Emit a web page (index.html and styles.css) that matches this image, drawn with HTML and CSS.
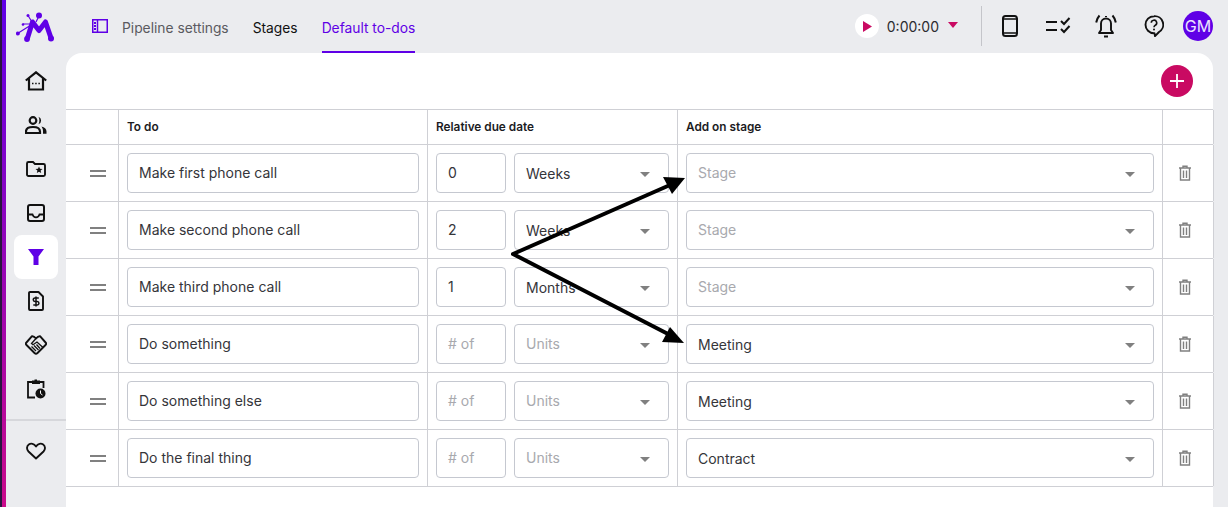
FILE: index.html
```html
<!DOCTYPE html>
<html lang="en">
<head>
<meta charset="utf-8">
<title>Default to-dos</title>
<link rel="stylesheet" href="styles.css">
</head>
<body>
<div class="rail"></div>
<div class="app">
  <header class="topbar">
    <svg class="logo" viewBox="0 0 38 30" width="38" height="30">
      <g fill="#5f00e6" stroke="#5f00e6">
        <path d="M11.500 26 L16.500 10 L23 18.500 L29.500 10 L35 26" fill="none" stroke-width="5" stroke-linejoin="round" stroke-linecap="round"/>
        <path d="M16 10 L12 3.500 M23 4 L20 10 M15 13 L1.500 21.500 M15 12 L7 12" fill="none" stroke-width="1.200"/>
        <circle cx="23" cy="3.500" r="3" stroke="none"/><circle cx="12" cy="3.500" r="1.500" stroke="none"/>
        <circle cx="7" cy="12.500" r="1.300" stroke="none"/><circle cx="1.900" cy="21.500" r="2" stroke="none"/>
        <circle cx="11" cy="27" r="2.900" stroke="none"/><circle cx="35" cy="26.500" r="3" stroke="none"/>
      </g>
    </svg>
    <nav class="tabs">
      <svg class="panel-icon" viewBox="0 0 16 14" width="16" height="14"><path d="M.75.75h14.500v12.500H.75zM5.500.75v12.500" fill="none" stroke="#5f00e6" stroke-width="1.500"/><path d="M2 3h2v2H2zM2 6h2v2H2zM2 9h2v2H2z" fill="#5f00e6"/></svg>
      <a class="tab tab-muted">Pipeline settings</a>
      <a class="tab">Stages</a>
      <a class="tab tab-active">Default to-dos</a>
    </nav>
    <div class="actions">
      <span class="play"><svg viewBox="0 0 10 12" width="9" height="11"><path d="M0 0l10 6-10 6z" fill="#c90a62"/></svg></span>
      <span class="time">0:00:00</span>
      <span class="caret"></span>
      <span class="vline"></span>
      <svg class="act act-phone" viewBox="0 0 16 22" width="16" height="22"><rect x="1" y="1" width="14" height="20" rx="2.500" fill="none" stroke="#111" stroke-width="2"/><path d="M2 4h12M2 18h12" stroke="#111" stroke-width="1.300"/></svg>
      <svg class="act act-tasks" viewBox="0 0 26 18" width="26" height="18"><path d="M1 5h11M1 13h11" stroke="#111" stroke-width="2.200"/><path d="M16 4l3 3 5.500-6M16 12l3 3 5.500-6" fill="none" stroke="#111" stroke-width="2"/></svg>
      <svg class="act act-bell" viewBox="0 0 22 24" width="22" height="24"><path d="M4 19h14l-2-3V9.500a5 5 0 0 0-10 0V16z" fill="none" stroke="#111" stroke-width="1.900" stroke-linejoin="round"/><path d="M9 22.500h4M11 3V2" stroke="#111" stroke-width="2"/><path d="M4.500 1.500Q1.800 4.500 1.200 8.500M17.500 1.500Q20.200 4.500 20.800 8.500" fill="none" stroke="#111" stroke-width="2"/></svg>
      <svg class="act act-help" viewBox="0 0 20 22" width="20" height="22"><path d="M10 1.200a8.500 8.500 0 1 0 0 17h.500l.5 3 4-4.200A8.500 8.500 0 0 0 10 1.200z" fill="none" stroke="#111" stroke-width="1.900" stroke-linejoin="round"/><path d="M7.300 7.800a2.700 2.700 0 1 1 4 2.400c-.9.500-1.300 1-1.300 2" fill="none" stroke="#111" stroke-width="1.600"/><circle cx="10" cy="14.600" r="1" fill="#111"/></svg>
      <span class="avatar">GM</span>
    </div>
  </header>
  <div class="body">
    <aside class="sidebar">
      <a class="side-item"><svg viewBox="0 0 22 20" width="22" height="20"><path d="M.8 9.500L11 1.300l10.200 8.200M4 7.500V18.500h14V7.500" fill="none" stroke="#111" stroke-width="2.200"/><path d="M7 12.500h1.500M10.200 12.500h1.500M13.400 12.500h1.500" stroke="#111" stroke-width="1.500"/></svg></a>
      <a class="side-item"><svg viewBox="0 0 22 18" width="22" height="18"><circle cx="8" cy="4.500" r="3.300" fill="none" stroke="#111" stroke-width="2.200"/><path d="M1 17v-1.500C1 12.500 4 11 8 11s7 1.500 7 4.500V17z" fill="none" stroke="#111" stroke-width="2.200"/><path d="M13.500.8a4 4 0 0 1 0 7.500c1.200-2.300 1.200-5.200 0-7.500zM16.500 10.500c3 .7 5 2.300 5 5V17.800h-3.500v-2.300c0-2-.5-3.500-1.500-5z" fill="#111"/></svg></a>
      <a class="side-item"><svg viewBox="0 0 20 16" width="20" height="16"><path d="M1 2.500A1.500 1.500 0 0 1 2.500 1H7l2 2h8.500A1.500 1.500 0 0 1 19 4.500v9a1.500 1.500 0 0 1-1.500 1.500h-15A1.500 1.500 0 0 1 1 13.500z" fill="none" stroke="#111" stroke-width="1.900"/><path d="M13 5.500l1 2.300 2.500.2-1.900 1.600.6 2.400-2.200-1.300-2.200 1.300.6-2.400L9.500 8l2.500-.2z" fill="#111"/></svg></a>
      <a class="side-item"><svg viewBox="0 0 18 18" width="18" height="18"><rect x="1" y="1" width="16" height="16" rx="2" fill="none" stroke="#111" stroke-width="2"/><path d="M1 10.500h4.500c.7 2 2 2.800 3.500 2.800s2.800-.8 3.500-2.800H17" fill="none" stroke="#111" stroke-width="1.800"/></svg></a>
      <a class="side-item side-active"><svg viewBox="0 0 16 16" width="16" height="16"><path d="M0 0h16l-5.500 7.500V16h-5V7.500z" fill="#5f00e6"/></svg></a>
      <a class="side-item"><svg viewBox="0 0 16 20" width="16" height="20"><path d="M1 2a1 1 0 0 1 1-1h8.500L15 5.500V18a1 1 0 0 1-1 1H2a1 1 0 0 1-1-1z" fill="none" stroke="#111" stroke-width="1.900" stroke-linejoin="round"/><path d="M10.800 7H7a1.500 1.500 0 0 0 0 3.500h2.200a1.600 1.600 0 0 1 0 3.500H5.300M8 5.500V15.500" fill="none" stroke="#111" stroke-width="1.500"/></svg></a>
      <a class="side-item"><svg viewBox="0 0 22 20" width="22" height="20"><path d="M11 3.500Q9 1 7 1.200L1 8q-.5 1 .5 2l8 8q1.500 1.300 3 0l8-8q1-1 .5-2l-6-6.800Q13 1 11 3.500z" fill="none" stroke="#111" stroke-width="1.900" stroke-linejoin="round"/><path d="M11 3.500L6.500 8.500l1.500 1.300 4-2.800 6 5.500M6.500 11.500l4.500 4.500M9 10.500l4.500 4.500M11.500 9.500l3.500 4" fill="none" stroke="#111" stroke-width="1.300"/></svg></a>
      <a class="side-item"><svg viewBox="0 0 20 20" width="20" height="20"><path d="M6 3H2v15.500h7M14 3h3.500v6" fill="none" stroke="#111" stroke-width="1.800"/><path d="M6 1.500h2.500V.5h2.500v1h3V5H6z" fill="#111"/><circle cx="14.500" cy="14.500" r="5" fill="#111"/><path d="M14.500 11.500v3l2 1.500" fill="none" stroke="#fff" stroke-width="1"/></svg></a>
      <div class="side-rule"></div>
      <a class="side-item"><svg viewBox="0 0 20 18" width="20" height="18"><path d="M10 16.500L2.500 9.500C.3 7.300.7 4 2.800 2.500 5 1 8 1.500 10 4.500c2-3 5-3.500 7.200-2 2.100 1.500 2.500 4.800.3 7z" fill="none" stroke="#111" stroke-width="1.900" stroke-linejoin="round"/></svg></a>
    </aside>
    <main class="card">
      <div class="card-top">
        <button class="add"><svg viewBox="0 0 14 14" width="14" height="14"><path d="M7 0v14M0 7h14" stroke="#fff" stroke-width="1.800"/></svg></button>
      </div>
      <div class="table">
        <div class="row row-head">
          <div class="cell c-drag"></div>
          <div class="cell c-todo">To do</div>
          <div class="cell c-due">Relative due date</div>
          <div class="cell c-stage">Add on stage</div>
          <div class="cell c-del"></div>
        </div>
        <div class="row">
          <div class="cell c-drag"><span class="drag"></span></div>
          <div class="cell c-todo"><div class="field">Make first phone call</div></div>
          <div class="cell c-due"><div class="field num">0</div><div class="field sel">Weeks<i class="arrow"></i></div></div>
          <div class="cell c-stage"><div class="field sel ph">Stage<i class="arrow"></i></div></div>
          <div class="cell c-del"><svg class="trash" viewBox="0 0 14 16" width="14" height="16"><path d="M1 3h12M5 3V1.200h4V3M2.500 3v12h9V3M5.500 5.500v7.500M8.500 5.500v7.500" fill="none" stroke="#808080" stroke-width="1.400"/></svg></div>
        </div>
        <div class="row">
          <div class="cell c-drag"><span class="drag"></span></div>
          <div class="cell c-todo"><div class="field">Make second phone call</div></div>
          <div class="cell c-due"><div class="field num">2</div><div class="field sel">Weeks<i class="arrow"></i></div></div>
          <div class="cell c-stage"><div class="field sel ph">Stage<i class="arrow"></i></div></div>
          <div class="cell c-del"><svg class="trash" viewBox="0 0 14 16" width="14" height="16"><path d="M1 3h12M5 3V1.200h4V3M2.500 3v12h9V3M5.500 5.500v7.500M8.500 5.500v7.500" fill="none" stroke="#808080" stroke-width="1.400"/></svg></div>
        </div>
        <div class="row">
          <div class="cell c-drag"><span class="drag"></span></div>
          <div class="cell c-todo"><div class="field">Make third phone call</div></div>
          <div class="cell c-due"><div class="field num">1</div><div class="field sel">Months<i class="arrow"></i></div></div>
          <div class="cell c-stage"><div class="field sel ph">Stage<i class="arrow"></i></div></div>
          <div class="cell c-del"><svg class="trash" viewBox="0 0 14 16" width="14" height="16"><path d="M1 3h12M5 3V1.200h4V3M2.500 3v12h9V3M5.500 5.500v7.500M8.500 5.500v7.500" fill="none" stroke="#808080" stroke-width="1.400"/></svg></div>
        </div>
        <div class="row">
          <div class="cell c-drag"><span class="drag"></span></div>
          <div class="cell c-todo"><div class="field">Do something</div></div>
          <div class="cell c-due"><div class="field num ph">#&nbsp;of</div><div class="field sel ph">Units<i class="arrow"></i></div></div>
          <div class="cell c-stage"><div class="field sel">Meeting<i class="arrow"></i></div></div>
          <div class="cell c-del"><svg class="trash" viewBox="0 0 14 16" width="14" height="16"><path d="M1 3h12M5 3V1.200h4V3M2.500 3v12h9V3M5.500 5.500v7.500M8.500 5.500v7.500" fill="none" stroke="#808080" stroke-width="1.400"/></svg></div>
        </div>
        <div class="row">
          <div class="cell c-drag"><span class="drag"></span></div>
          <div class="cell c-todo"><div class="field">Do something else</div></div>
          <div class="cell c-due"><div class="field num ph">#&nbsp;of</div><div class="field sel ph">Units<i class="arrow"></i></div></div>
          <div class="cell c-stage"><div class="field sel">Meeting<i class="arrow"></i></div></div>
          <div class="cell c-del"><svg class="trash" viewBox="0 0 14 16" width="14" height="16"><path d="M1 3h12M5 3V1.200h4V3M2.500 3v12h9V3M5.500 5.500v7.500M8.500 5.500v7.500" fill="none" stroke="#808080" stroke-width="1.400"/></svg></div>
        </div>
        <div class="row">
          <div class="cell c-drag"><span class="drag"></span></div>
          <div class="cell c-todo"><div class="field">Do the final thing</div></div>
          <div class="cell c-due"><div class="field num ph">#&nbsp;of</div><div class="field sel ph">Units<i class="arrow"></i></div></div>
          <div class="cell c-stage"><div class="field sel">Contract<i class="arrow"></i></div></div>
          <div class="cell c-del"><svg class="trash" viewBox="0 0 14 16" width="14" height="16"><path d="M1 3h12M5 3V1.200h4V3M2.500 3v12h9V3M5.500 5.500v7.500M8.500 5.500v7.500" fill="none" stroke="#808080" stroke-width="1.400"/></svg></div>
        </div>
      </div>
    </main>
  </div>
</div>
<svg class="annot" viewBox="0 0 200 200" width="200" height="200">
  <path d="M3 84L160 15M3 84L160 165" fill="none" stroke="#000" stroke-width="4" stroke-linecap="round"/>
  <path d="M175 8L153 7L162 24zM174 173L152 172L160 157z" fill="#000"/>
</svg>
</body>
</html>
```
FILE: styles.css
```css
* { box-sizing: border-box; }
html, body { margin: 0; height: 100%; }
body {
  display: flex;
  height: 507px;
  overflow: hidden;
  background: #ebecef;
  font-family: Inter, "Liberation Sans", sans-serif;
  font-size: 14px;
  color: #2b2b2f;
  position: relative;
}
.rail {
  width: 6px;
  flex: none;
  border-left: 2px solid #2a1440;
  background: linear-gradient(180deg, #5f00e6 0%, #c90a8a 100%);
}
.app { flex: 1; display: flex; flex-direction: column; min-width: 0; }
.topbar { height: 53px; flex: none; display: flex; align-items: center; padding-right: 15px; }
.logo { margin: 0 0 0 10px; flex: none; }
.tabs { display: flex; align-items: stretch; height: 53px; margin-left: 38px; }
.panel-icon { align-self: center; margin-right: 14px; margin-top: -1px; }
.tab { display: flex; align-items: center; margin-right: 24px; padding-top: 5px; color: #111; font-size: 13.800px; border-bottom: 2px solid transparent; }
.tab-muted { color: #5a5a60; }
.tab-active { color: #5f00e6; border-bottom-color: #5f00e6; margin-right: 0; }
.actions { margin-left: auto; display: flex; align-items: center; margin-top: -1px; }
.play { width: 24px; height: 24px; border-radius: 50%; background: #fff; display: flex; align-items: center; justify-content: center; padding-left: 2px; }
.time { margin-left: 8px; font-size: 14px; color: #2b2b2f; }
.caret { margin-left: 9px; margin-top: -3px; border-left: 5px solid transparent; border-right: 5px solid transparent; border-top: 6px solid #c90a62; }
.vline { width: 1px; height: 40px; background: #c4c5ca; margin: 0 20px 0 23px; }
.act { flex: none; }
.act-phone { margin-right: 27px; }
.act-tasks { margin-right: 24px; }
.act-bell { margin-right: 27px; }
.act-help { margin-right: 19px; }
.avatar { width: 30px; height: 30px; border-radius: 50%; background: #5f00e6; color: #ebe3ff; font-size: 16px; display: flex; align-items: center; justify-content: center; }
.body { flex: 1; display: flex; min-height: 0; padding-right: 15px; }
.sidebar { width: 60px; flex: none; display: flex; flex-direction: column; align-items: center; padding-top: 6px; }
.side-item { width: 44px; height: 44px; flex: none; display: flex; align-items: center; justify-content: center; border-radius: 8px; }
.side-active { background: #fff; }
.side-rule { width: 60px; height: 2px; background: #d6d7db; margin: 8px 0 8px; flex: none; }
.card { flex: 1; background: #fff; border-radius: 16px 16px 0 0; min-width: 0; }
.card-top { height: 56px; display: flex; justify-content: flex-end; align-items: flex-start; padding: 12px 20px 0 0; }
.add { width: 32px; height: 32px; border: 0; padding: 0; border-radius: 50%; background: #c90a62; display: flex; align-items: center; justify-content: center; }
.table { border-top: 1px solid #cfd0d5; }
.row { display: flex; height: 57px; border-bottom: 1px solid #cfd0d5; }
.row-head { height: 35px; font-size: 11.800px; font-weight: 600; color: #1c1c1f; }
.cell { display: flex; align-items: center; border-right: 1px solid #cfd0d5; padding: 0 8px; flex: none; }
.c-drag { width: 53px; justify-content: center; padding: 0 0 0 12px; }
.c-todo { width: 309px; }
.c-due { width: 250px; gap: 8px; }
.c-stage { width: 485px; }
.c-del { width: 51px; justify-content: center; padding-right: 15px; padding-bottom: 1px; }
.drag { width: 16px; height: 7px; border-top: 2px solid #808080; border-bottom: 2px solid #808080; }
.field {
  height: 40px;
  flex: 1;
  display: flex;
  align-items: center;
  padding: 0 11px 2px;
  border: 1px solid #c5c8d0;
  border-radius: 4px;
  color: #35353a;
  font-size: 14px;
  background: #fff;
}
.num { flex: none; width: 70px; }
.sel { position: relative; padding-top: 1px; padding-bottom: 0; }
.sel.ph { padding-top: 0; padding-bottom: 2px; }
.ph { color: #a8a9ae; }
.arrow { position: absolute; right: 18px; top: 18px; border-left: 5.500px solid transparent; border-right: 5.500px solid transparent; border-top: 5px solid #808080; }
.annot { position: absolute; left: 510px; top: 170px; pointer-events: none; }
```
